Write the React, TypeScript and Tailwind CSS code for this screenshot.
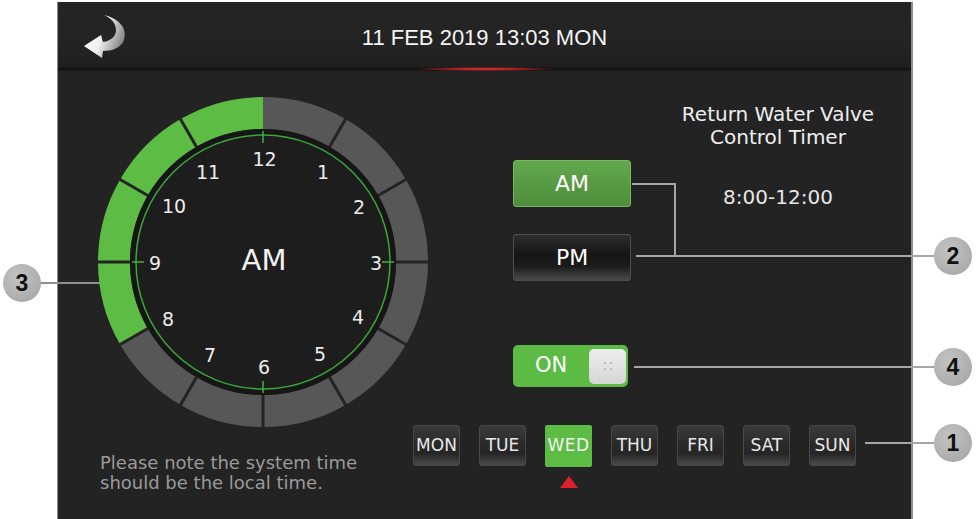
import React from "react";

const C = 165;
function pt(r: number, deg: number): [number, number] {
  const a = (deg * Math.PI) / 180;
  return [C + r * Math.sin(a), C - r * Math.cos(a)];
}
function seg(r1: number, r2: number, a1: number, a2: number) {
  const [x1, y1] = pt(r2, a1);
  const [x2, y2] = pt(r2, a2);
  const [x3, y3] = pt(r1, a2);
  const [x4, y4] = pt(r1, a1);
  return `M${x1} ${y1} A${r2} ${r2} 0 0 1 ${x2} ${y2} L${x3} ${y3} A${r1} ${r1} 0 0 0 ${x4} ${y4} Z`;
}

const nums: [string, number, number][] = [
  ["12", 1.5, -103],
  ["1", 60, -90],
  ["2", 96, -55],
  ["3", 113, 1],
  ["4", 95, 55],
  ["5", 57, 92],
  ["6", 1, 105],
  ["7", -53, 93],
  ["8", -95, 57],
  ["9", -108, 1],
  ["10", -89, -56],
  ["11", -55, -90],
];

function Clock() {
  const segs = Array.from({ length: 12 }, (_, i) => i);
  return (
    <svg width={330} height={330} viewBox="0 0 330 330" className="block overflow-visible">
      {segs.map((i) => (
        <path
          key={i}
          d={seg(133, 165, i * 30, (i + 1) * 30)}
          fill={i >= 8 ? "#5cbc44" : "#575757"}
        />
      ))}
      {segs.map((i) =>
        i === 0 ? null : (
          <line
            key={"s" + i}
            x1={pt(128, i * 30)[0]}
            y1={pt(128, i * 30)[1]}
            x2={pt(168, i * 30)[0]}
            y2={pt(168, i * 30)[1]}
            stroke="#232323"
            strokeWidth={3}
          />
        )
      )}
      <circle cx={C} cy={C} r={133} fill="#161616" />
      <circle cx={C} cy={C} r={127} fill="#1d1d1d" stroke="#3aa83a" strokeWidth={1.5} />
      {[0, 90, 180, 270].map((a) => (
        <line
          key={"t" + a}
          x1={pt(131, a)[0]}
          y1={pt(131, a)[1]}
          x2={pt(119, a)[0]}
          y2={pt(119, a)[1]}
          stroke="#3fb03f"
          strokeWidth={1.5}
        />
      ))}
      {nums.map(([n, dx, dy]) => (
        <text
          key={n}
          x={C + dx}
          y={C + dy}
          textAnchor="middle"
          dominantBaseline="central"
          fill="#ececec"
          fontSize={19}
          fontFamily="'DejaVu Sans', sans-serif"
        >
          {n}
        </text>
      ))}
      <text
        x={C + 1}
        y={C - 2}
        textAnchor="middle"
        dominantBaseline="central"
        fill="#f2f2f2"
        fontSize={29}
        fontFamily="'DejaVu Sans', sans-serif"
      >
        AM
      </text>
    </svg>
  );
}

function BackArrow() {
  return (
    <svg width={50} height={52} viewBox="80 8 50 52" className="block">
      <defs>
        <linearGradient id="ag" x1="0" y1="0" x2="1" y2="0.4">
          <stop offset="0" stopColor="#ffffff" />
          <stop offset="0.55" stopColor="#f0f0f0" />
          <stop offset="1" stopColor="#8c8c8c" />
        </linearGradient>
      </defs>
      <path
        d="M104 13 C118 16 128 26 124 38 C121 46 112 49 103 49 L102 56 L84 44 L101 33 L103 40 C111 39 116 34 116 28 C116 21 111 16 104 13 Z"
        fill="url(#ag)"
      />
    </svg>
  );
}

const days = ["MON", "TUE", "WED", "THU", "FRI", "SAT", "SUN"];

function Callout({ n, cls }: { n: string; cls: string }) {
  return (
    <div
      className={
        "absolute w-[38px] h-[38px] rounded-full bg-[radial-gradient(circle_at_40%_35%,#c4c4c4,#acacac_70%,#9c9c9c)] flex items-center justify-center text-[23px] font-bold text-[#111] font-['Liberation_Sans',Arial,sans-serif] " +
        cls
      }
    >
      {n}
    </div>
  );
}

export default function App() {
  return (
    <div className="relative w-[976px] h-[519px] bg-white overflow-hidden font-['DejaVu_Sans',sans-serif]">
      <div className="flex">
        <div className="w-[57px] shrink-0" />
        <div className="w-[856px] h-[517px] mt-[2px] bg-[#232323] border-l border-[#8a8a8a] border-r-2 border-r-[#8f8f8f] flex flex-col">
          {/* header */}
          <div className="h-[65px] grid grid-cols-[1fr_auto_1fr] items-center bg-[linear-gradient(to_bottom,#252525,#232323_70%,#1f1f1f)]">
            <div className="pl-[22px] pt-[2px]">
              <BackArrow />
            </div>
            <div className="mt-[6px] text-[22px] leading-none text-[#f4f4f4] font-['Liberation_Sans',Arial,sans-serif]">
              11 FEB 2019 13:03 MON
            </div>
            <div />
          </div>
          <div className="h-[4px] bg-[linear-gradient(to_bottom,#1b1b1b,#111111_50%,#1b1b1b)] flex justify-center items-center">
            <div className="w-[140px] h-[4px] bg-[radial-gradient(ellipse_at_center,#f0363c_0%,rgba(215,35,40,0.75)_35%,rgba(35,35,35,0)_72%)]" />
          </div>

          {/* body top row */}
          <div className="flex items-start">
            <div className="ml-[40px] mt-[26px] w-[330px] h-[330px] shrink-0">
              <Clock />
            </div>
            <div className="ml-[85px] flex items-start">
              <div className="w-[118px] mt-[89px] flex flex-col">
                <div className="h-[47px] rounded-[3px] bg-[linear-gradient(to_bottom,#64a94e,#5a9c45_40%,#4f8e3c)] border border-[#74b860] flex items-center justify-center text-[22px] text-white">
                  AM
                </div>
                <div className="mt-[27px] h-[47px] rounded-[3px] bg-[linear-gradient(to_bottom,#2e2e2e,#151515_45%,#1c1c1c_70%,#4a4a4a)] border border-[#4e4e4e] flex items-center justify-center text-[22px] text-white">
                  PM
                </div>
                <div className="mt-[64px] w-[115px] h-[42px] rounded-[5px] bg-[#5cbb45] flex items-center">
                  <div className="w-[76px] text-center text-[21px] font-medium text-white">ON</div>
                  <div className="w-[37px] h-[35px] rounded-[5px] bg-[linear-gradient(to_bottom,#ededed,#d6d6d6)] flex flex-col items-center justify-center gap-[4px]">
                    <div className="flex gap-[4px]">
                      <span className="block w-[2px] h-[2px] bg-[#bdbdbd]" />
                      <span className="block w-[2px] h-[2px] bg-[#bdbdbd]" />
                    </div>
                    <div className="flex gap-[4px]">
                      <span className="block w-[2px] h-[2px] bg-[#bdbdbd]" />
                      <span className="block w-[2px] h-[2px] bg-[#bdbdbd]" />
                    </div>
                  </div>
                </div>
              </div>
              <div className="ml-[37px] w-[220px] text-center text-[#efefef]">
                <div className="mt-[32px] text-[20px] leading-[23px]">
                  Return Water Valve
                  <br />
                  Control Timer
                </div>
                <div className="mt-[36px] text-[20px] leading-[24px] text-[#e6e6e6]">8:00-12:00</div>
              </div>
            </div>
          </div>

          {/* bottom row */}
          <div className="-mt-[4px] flex items-start pl-[42px]">
            <div className="w-[313px] pt-[30px] text-[18px] leading-[20px] text-[#9a9a9a]">
              Please note the system time
              <br />
              should be the local time.
            </div>
            <div className="pt-[2px] flex gap-[19px]">
              {days.map((d) => (
                <div key={d} className="flex flex-col items-center">
                  {d === "WED" ? (
                    <div className="w-[47px] h-[42px] rounded-[2px] bg-[#5cbc44] flex items-center justify-center text-[17px] tracking-[0.5px] text-[#f2f2f2]">
                      {d}
                    </div>
                  ) : (
                    <div className="w-[47px] h-[41px] rounded-[3px] border border-[#474747] bg-[linear-gradient(to_bottom,#3b3b3b,#2a2a2a_45%,#252525_70%,#4a4a4a)] flex items-center justify-center text-[17px] text-[#e8e8e8]">
                      {d}
                    </div>
                  )}
                  {d === "WED" && (
                    <svg width={18} height={12} viewBox="0 0 18 12" className="mt-[9px] block">
                      <path d="M9 0 L18 12 L0 12 Z" fill="#e0202a" />
                    </svg>
                  )}
                </div>
              ))}
            </div>
          </div>
        </div>
      </div>

      {/* callout annotations */}
      <div className="absolute left-[40px] top-[282px] w-[60px] h-[2px] bg-[#8f8f8f]" />
      <Callout n="3" cls="left-[3px] top-[264px]" />

      <div className="absolute left-[632px] top-[183px] w-[44px] h-[2px] bg-[#a6a6a6]" />
      <div className="absolute left-[674px] top-[183px] w-[2px] h-[74px] bg-[#a6a6a6]" />
      <div className="absolute left-[636px] top-[255px] w-[298px] h-[2px] bg-[#a6a6a6]" />
      <Callout n="2" cls="left-[934px] top-[237px]" />

      <div className="absolute left-[634px] top-[366px] w-[300px] h-[2px] bg-[#a6a6a6]" />
      <Callout n="4" cls="left-[934px] top-[348px]" />

      <div className="absolute left-[865px] top-[442px] w-[69px] h-[2px] bg-[#a6a6a6]" />
      <Callout n="1" cls="left-[934px] top-[424px]" />
    </div>
  );
}
